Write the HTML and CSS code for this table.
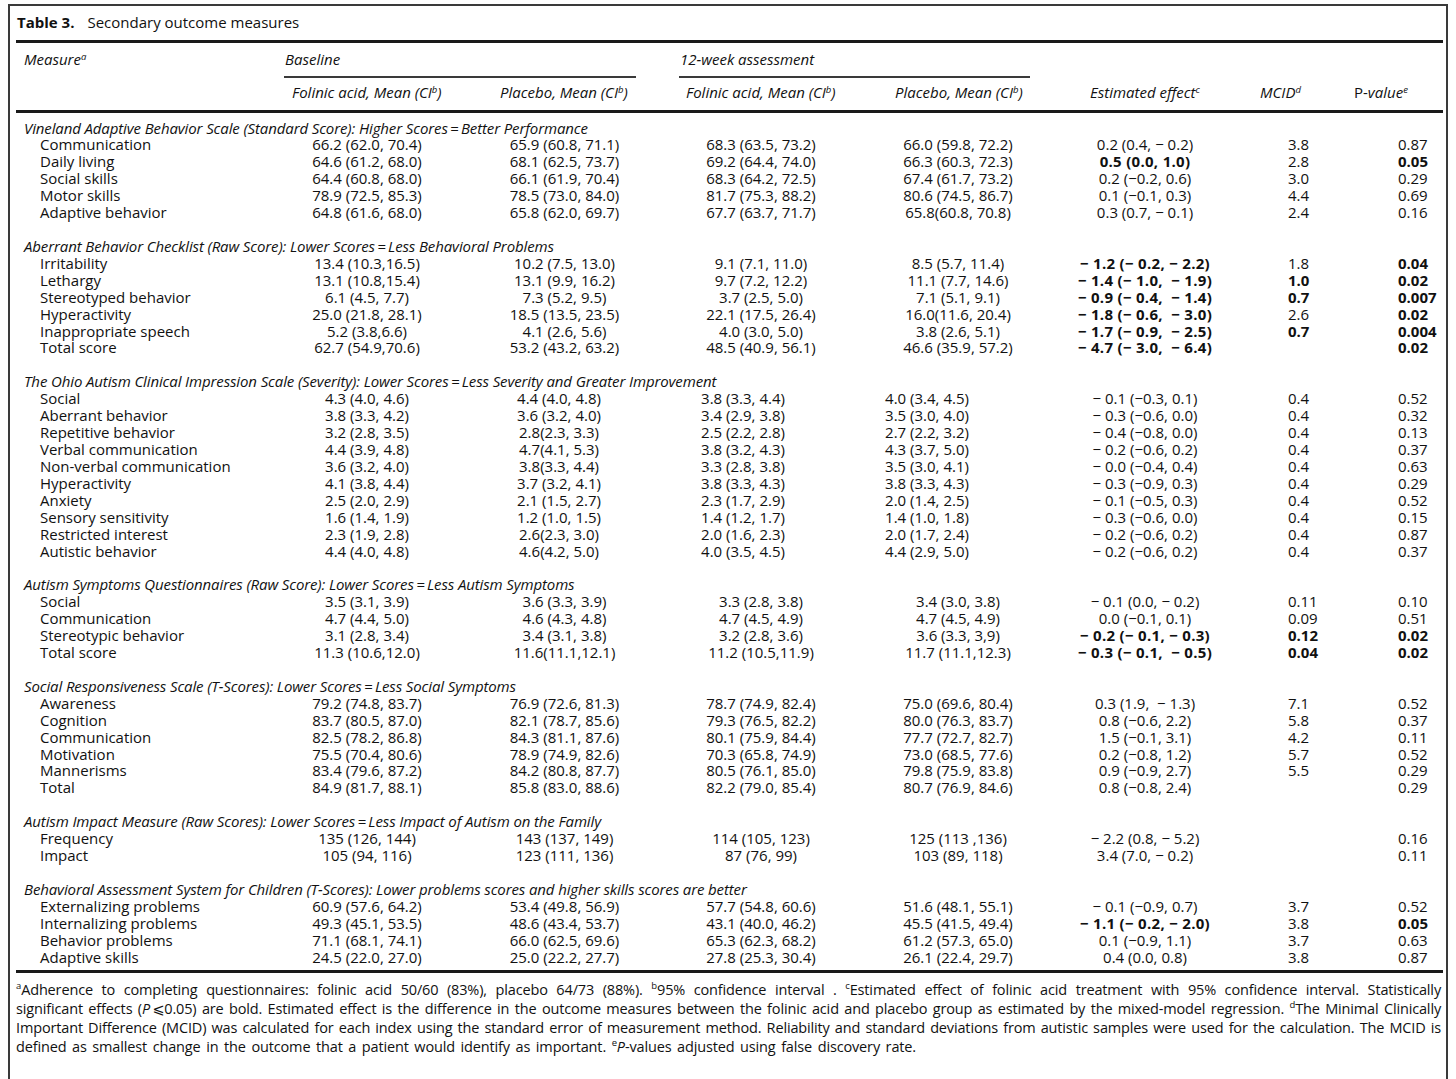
FILE: index.html
```html
<!DOCTYPE html>
<html lang="en">
<head>
<meta charset="utf-8">
<title>Table 3. Secondary outcome measures</title>
<link rel="stylesheet" href="styles.css">
</head>
<body>
<div class="frame">
  <div class="caption"><b>Table 3.</b>Secondary outcome measures</div>

  <div class="thead">
    <div class="hrow top">
      <div class="h-measure">Measure<sup>a</sup></div>
      <div class="group g1"><span>Baseline</span></div>
      <div class="group g2"><span>12-week assessment</span></div>
    </div>
    <div class="hrow sub">
      <div></div>
      <div class="h1">Folinic acid, Mean (CI<sup>b</sup>)</div>
      <div class="h2">Placebo, Mean (CI<sup>b</sup>)</div>
      <div class="h3">Folinic acid, Mean (CI<sup>b</sup>)</div>
      <div class="h4">Placebo, Mean (CI<sup>b</sup>)</div>
      <div class="h5">Estimated effect<sup>c</sup></div>
      <div class="h6">MCID<sup>d</sup></div>
      <div class="h7"><span class="up">P-</span>value<sup>e</sup></div>
    </div>
  </div>

  <div class="tbody">
    <div class="sec">
      <div class="sh">Vineland Adaptive Behavior Scale (Standard Score): Higher Scores&#8201;=&#8201;Better Performance</div>
      <div class="r"><span class="m">Communication</span><span class="v v1">66.2 (62.0, 70.4)</span><span class="v v2">65.9 (60.8, 71.1)</span><span class="v v3">68.3 (63.5, 73.2)</span><span class="v v4">66.0 (59.8, 72.2)</span><span class="v v5">0.2 (0.4, &minus; 0.2)</span><span class="mc">3.8</span><span class="pv">0.87</span></div>
      <div class="r"><span class="m">Daily living</span><span class="v v1">64.6 (61.2, 68.0)</span><span class="v v2">68.1 (62.5, 73.7)</span><span class="v v3">69.2 (64.4, 74.0)</span><span class="v v4">66.3 (60.3, 72.3)</span><span class="v v5"><b>0.5 (0.0, 1.0)</b></span><span class="mc">2.8</span><span class="pv"><b>0.05</b></span></div>
      <div class="r"><span class="m">Social skills</span><span class="v v1">64.4 (60.8, 68.0)</span><span class="v v2">66.1 (61.9, 70.4)</span><span class="v v3">68.3 (64.2, 72.5)</span><span class="v v4">67.4 (61.7, 73.2)</span><span class="v v5">0.2 (&minus;0.2, 0.6)</span><span class="mc">3.0</span><span class="pv">0.29</span></div>
      <div class="r"><span class="m">Motor skills</span><span class="v v1">78.9 (72.5, 85.3)</span><span class="v v2">78.5 (73.0, 84.0)</span><span class="v v3">81.7 (75.3, 88.2)</span><span class="v v4">80.6 (74.5, 86.7)</span><span class="v v5">0.1 (&minus;0.1, 0.3)</span><span class="mc">4.4</span><span class="pv">0.69</span></div>
      <div class="r"><span class="m">Adaptive behavior</span><span class="v v1">64.8 (61.6, 68.0)</span><span class="v v2">65.8 (62.0, 69.7)</span><span class="v v3">67.7 (63.7, 71.7)</span><span class="v v4">65.8(60.8, 70.8)</span><span class="v v5">0.3 (0.7, &minus; 0.1)</span><span class="mc">2.4</span><span class="pv">0.16</span></div>
    </div>

    <div class="sec">
      <div class="sh">Aberrant Behavior Checklist (Raw Score): Lower Scores&#8201;=&#8201;Less Behavioral Problems</div>
      <div class="r"><span class="m">Irritability</span><span class="v v1">13.4 (10.3,16.5)</span><span class="v v2">10.2 (7.5, 13.0)</span><span class="v v3">9.1 (7.1, 11.0)</span><span class="v v4">8.5 (5.7, 11.4)</span><span class="v v5"><b>&minus; 1.2 (&minus; 0.2, &minus; 2.2)</b></span><span class="mc">1.8</span><span class="pv"><b>0.04</b></span></div>
      <div class="r"><span class="m">Lethargy</span><span class="v v1">13.1 (10.8,15.4)</span><span class="v v2">13.1 (9.9, 16.2)</span><span class="v v3">9.7 (7.2, 12.2)</span><span class="v v4">11.1 (7.7, 14.6)</span><span class="v v5"><b>&minus; 1.4 (&minus; 1.0, &nbsp;&minus; 1.9)</b></span><span class="mc"><b>1.0</b></span><span class="pv"><b>0.02</b></span></div>
      <div class="r"><span class="m">Stereotyped behavior</span><span class="v v1">6.1 (4.5, 7.7)</span><span class="v v2">7.3 (5.2, 9.5)</span><span class="v v3">3.7 (2.5, 5.0)</span><span class="v v4">7.1 (5.1, 9.1)</span><span class="v v5"><b>&minus; 0.9 (&minus; 0.4, &nbsp;&minus; 1.4)</b></span><span class="mc"><b>0.7</b></span><span class="pv"><b>0.007</b></span></div>
      <div class="r"><span class="m">Hyperactivity</span><span class="v v1">25.0 (21.8, 28.1)</span><span class="v v2">18.5 (13.5, 23.5)</span><span class="v v3">22.1 (17.5, 26.4)</span><span class="v v4">16.0(11.6, 20.4)</span><span class="v v5"><b>&minus; 1.8 (&minus; 0.6, &nbsp;&minus; 3.0)</b></span><span class="mc">2.6</span><span class="pv"><b>0.02</b></span></div>
      <div class="r"><span class="m">Inappropriate speech</span><span class="v v1">5.2 (3.8,6.6)</span><span class="v v2">4.1 (2.6, 5.6)</span><span class="v v3">4.0 (3.0, 5.0)</span><span class="v v4">3.8 (2.6, 5.1)</span><span class="v v5"><b>&minus; 1.7 (&minus; 0.9, &nbsp;&minus; 2.5)</b></span><span class="mc"><b>0.7</b></span><span class="pv"><b>0.004</b></span></div>
      <div class="r"><span class="m">Total score</span><span class="v v1">62.7 (54.9,70.6)</span><span class="v v2">53.2 (43.2, 63.2)</span><span class="v v3">48.5 (40.9, 56.1)</span><span class="v v4">46.6 (35.9, 57.2)</span><span class="v v5"><b>&minus; 4.7 (&minus; 3.0, &nbsp;&minus; 6.4)</b></span><span class="mc"></span><span class="pv"><b>0.02</b></span></div>
    </div>

    <div class="sec ohio">
      <div class="sh">The Ohio Autism Clinical Impression Scale (Severity): Lower Scores&#8201;=&#8201;Less Severity and Greater Improvement</div>
      <div class="r"><span class="m">Social</span><span class="v v1">4.3 (4.0, 4.6)</span><span class="v v2">4.4 (4.0, 4.8)</span><span class="v v3">3.8 (3.3, 4.4)</span><span class="v v4">4.0 (3.4, 4.5)</span><span class="v v5">&minus; 0.1 (&minus;0.3, 0.1)</span><span class="mc">0.4</span><span class="pv">0.52</span></div>
      <div class="r"><span class="m">Aberrant behavior</span><span class="v v1">3.8 (3.3, 4.2)</span><span class="v v2">3.6 (3.2, 4.0)</span><span class="v v3">3.4 (2.9, 3.8)</span><span class="v v4">3.5 (3.0, 4.0)</span><span class="v v5">&minus; 0.3 (&minus;0.6, 0.0)</span><span class="mc">0.4</span><span class="pv">0.32</span></div>
      <div class="r"><span class="m">Repetitive behavior</span><span class="v v1">3.2 (2.8, 3.5)</span><span class="v v2">2.8(2.3, 3.3)</span><span class="v v3">2.5 (2.2, 2.8)</span><span class="v v4">2.7 (2.2, 3.2)</span><span class="v v5">&minus; 0.4 (&minus;0.8, 0.0)</span><span class="mc">0.4</span><span class="pv">0.13</span></div>
      <div class="r"><span class="m">Verbal communication</span><span class="v v1">4.4 (3.9, 4.8)</span><span class="v v2">4.7(4.1, 5.3)</span><span class="v v3">3.8 (3.2, 4.3)</span><span class="v v4">4.3 (3.7, 5.0)</span><span class="v v5">&minus; 0.2 (&minus;0.6, 0.2)</span><span class="mc">0.4</span><span class="pv">0.37</span></div>
      <div class="r"><span class="m">Non-verbal communication</span><span class="v v1">3.6 (3.2, 4.0)</span><span class="v v2">3.8(3.3, 4.4)</span><span class="v v3">3.3 (2.8, 3.8)</span><span class="v v4">3.5 (3.0, 4.1)</span><span class="v v5">&minus; 0.0 (&minus;0.4, 0.4)</span><span class="mc">0.4</span><span class="pv">0.63</span></div>
      <div class="r"><span class="m">Hyperactivity</span><span class="v v1">4.1 (3.8, 4.4)</span><span class="v v2">3.7 (3.2, 4.1)</span><span class="v v3">3.8 (3.3, 4.3)</span><span class="v v4">3.8 (3.3, 4.3)</span><span class="v v5">&minus; 0.3 (&minus;0.9, 0.3)</span><span class="mc">0.4</span><span class="pv">0.29</span></div>
      <div class="r"><span class="m">Anxiety</span><span class="v v1">2.5 (2.0, 2.9)</span><span class="v v2">2.1 (1.5, 2.7)</span><span class="v v3">2.3 (1.7, 2.9)</span><span class="v v4">2.0 (1.4, 2.5)</span><span class="v v5">&minus; 0.1 (&minus;0.5, 0.3)</span><span class="mc">0.4</span><span class="pv">0.52</span></div>
      <div class="r"><span class="m">Sensory sensitivity</span><span class="v v1">1.6 (1.4, 1.9)</span><span class="v v2">1.2 (1.0, 1.5)</span><span class="v v3">1.4 (1.2, 1.7)</span><span class="v v4">1.4 (1.0, 1.8)</span><span class="v v5">&minus; 0.3 (&minus;0.6, 0.0)</span><span class="mc">0.4</span><span class="pv">0.15</span></div>
      <div class="r"><span class="m">Restricted interest</span><span class="v v1">2.3 (1.9, 2.8)</span><span class="v v2">2.6(2.3, 3.0)</span><span class="v v3">2.0 (1.6, 2.3)</span><span class="v v4">2.0 (1.7, 2.4)</span><span class="v v5">&minus; 0.2 (&minus;0.6, 0.2)</span><span class="mc">0.4</span><span class="pv">0.87</span></div>
      <div class="r"><span class="m">Autistic behavior</span><span class="v v1">4.4 (4.0, 4.8)</span><span class="v v2">4.6(4.2, 5.0)</span><span class="v v3">4.0 (3.5, 4.5)</span><span class="v v4">4.4 (2.9, 5.0)</span><span class="v v5">&minus; 0.2 (&minus;0.6, 0.2)</span><span class="mc">0.4</span><span class="pv">0.37</span></div>
    </div>

    <div class="sec">
      <div class="sh">Autism Symptoms Questionnaires (Raw Score): Lower Scores&#8201;=&#8201;Less Autism Symptoms</div>
      <div class="r"><span class="m">Social</span><span class="v v1">3.5 (3.1, 3.9)</span><span class="v v2">3.6 (3.3, 3.9)</span><span class="v v3">3.3 (2.8, 3.8)</span><span class="v v4">3.4 (3.0, 3.8)</span><span class="v v5">&minus; 0.1 (0.0, &minus; 0.2)</span><span class="mc">0.11</span><span class="pv">0.10</span></div>
      <div class="r"><span class="m">Communication</span><span class="v v1">4.7 (4.4, 5.0)</span><span class="v v2">4.6 (4.3, 4.8)</span><span class="v v3">4.7 (4.5, 4.9)</span><span class="v v4">4.7 (4.5, 4.9)</span><span class="v v5">0.0 (&minus;0.1, 0.1)</span><span class="mc">0.09</span><span class="pv">0.51</span></div>
      <div class="r"><span class="m">Stereotypic behavior</span><span class="v v1">3.1 (2.8, 3.4)</span><span class="v v2">3.4 (3.1, 3.8)</span><span class="v v3">3.2 (2.8, 3.6)</span><span class="v v4">3.6 (3.3, 3,9)</span><span class="v v5"><b>&minus; 0.2 (&minus; 0.1, &minus; 0.3)</b></span><span class="mc"><b>0.12</b></span><span class="pv"><b>0.02</b></span></div>
      <div class="r"><span class="m">Total score</span><span class="v v1">11.3 (10.6,12.0)</span><span class="v v2">11.6(11.1,12.1)</span><span class="v v3">11.2 (10.5,11.9)</span><span class="v v4">11.7 (11.1,12.3)</span><span class="v v5"><b>&minus; 0.3 (&minus; 0.1, &nbsp;&minus; 0.5)</b></span><span class="mc"><b>0.04</b></span><span class="pv"><b>0.02</b></span></div>
    </div>

    <div class="sec">
      <div class="sh">Social Responsiveness Scale (T-Scores): Lower Scores&#8201;=&#8201;Less Social Symptoms</div>
      <div class="r"><span class="m">Awareness</span><span class="v v1">79.2 (74.8, 83.7)</span><span class="v v2">76.9 (72.6, 81.3)</span><span class="v v3">78.7 (74.9, 82.4)</span><span class="v v4">75.0 (69.6, 80.4)</span><span class="v v5">0.3 (1.9, &nbsp;&minus; 1.3)</span><span class="mc">7.1</span><span class="pv">0.52</span></div>
      <div class="r"><span class="m">Cognition</span><span class="v v1">83.7 (80.5, 87.0)</span><span class="v v2">82.1 (78.7, 85.6)</span><span class="v v3">79.3 (76.5, 82.2)</span><span class="v v4">80.0 (76.3, 83.7)</span><span class="v v5">0.8 (&minus;0.6, 2.2)</span><span class="mc">5.8</span><span class="pv">0.37</span></div>
      <div class="r"><span class="m">Communication</span><span class="v v1">82.5 (78.2, 86.8)</span><span class="v v2">84.3 (81.1, 87.6)</span><span class="v v3">80.1 (75.9, 84.4)</span><span class="v v4">77.7 (72.7, 82.7)</span><span class="v v5">1.5 (&minus;0.1, 3.1)</span><span class="mc">4.2</span><span class="pv">0.11</span></div>
      <div class="r"><span class="m">Motivation</span><span class="v v1">75.5 (70.4, 80.6)</span><span class="v v2">78.9 (74.9, 82.6)</span><span class="v v3">70.3 (65.8, 74.9)</span><span class="v v4">73.0 (68.5, 77.6)</span><span class="v v5">0.2 (&minus;0.8, 1.2)</span><span class="mc">5.7</span><span class="pv">0.52</span></div>
      <div class="r"><span class="m">Mannerisms</span><span class="v v1">83.4 (79.6, 87.2)</span><span class="v v2">84.2 (80.8, 87.7)</span><span class="v v3">80.5 (76.1, 85.0)</span><span class="v v4">79.8 (75.9, 83.8)</span><span class="v v5">0.9 (&minus;0.9, 2.7)</span><span class="mc">5.5</span><span class="pv">0.29</span></div>
      <div class="r"><span class="m">Total</span><span class="v v1">84.9 (81.7, 88.1)</span><span class="v v2">85.8 (83.0, 88.6)</span><span class="v v3">82.2 (79.0, 85.4)</span><span class="v v4">80.7 (76.9, 84.6)</span><span class="v v5">0.8 (&minus;0.8, 2.4)</span><span class="mc"></span><span class="pv">0.29</span></div>
    </div>

    <div class="sec">
      <div class="sh">Autism Impact Measure (Raw Scores): Lower Scores&#8201;=&#8201;Less Impact of Autism on the Family</div>
      <div class="r"><span class="m">Frequency</span><span class="v v1">135 (126, 144)</span><span class="v v2">143 (137, 149)</span><span class="v v3">114 (105, 123)</span><span class="v v4">125 (113 ,136)</span><span class="v v5">&minus; 2.2 (0.8, &minus; 5.2)</span><span class="mc"></span><span class="pv">0.16</span></div>
      <div class="r"><span class="m">Impact</span><span class="v v1">105 (94, 116)</span><span class="v v2">123 (111, 136)</span><span class="v v3">87 (76, 99)</span><span class="v v4">103 (89, 118)</span><span class="v v5">3.4 (7.0, &minus; 0.2)</span><span class="mc"></span><span class="pv">0.11</span></div>
    </div>

    <div class="sec">
      <div class="sh">Behavioral Assessment System for Children (T-Scores): Lower problems scores and higher skills scores are better</div>
      <div class="r"><span class="m">Externalizing problems</span><span class="v v1">60.9 (57.6, 64.2)</span><span class="v v2">53.4 (49.8, 56.9)</span><span class="v v3">57.7 (54.8, 60.6)</span><span class="v v4">51.6 (48.1, 55.1)</span><span class="v v5">&minus; 0.1 (&minus;0.9, 0.7)</span><span class="mc">3.7</span><span class="pv">0.52</span></div>
      <div class="r"><span class="m">Internalizing problems</span><span class="v v1">49.3 (45.1, 53.5)</span><span class="v v2">48.6 (43.4, 53.7)</span><span class="v v3">43.1 (40.0, 46.2)</span><span class="v v4">45.5 (41.5, 49.4)</span><span class="v v5"><b>&minus; 1.1 (&minus; 0.2, &minus; 2.0)</b></span><span class="mc">3.8</span><span class="pv"><b>0.05</b></span></div>
      <div class="r"><span class="m">Behavior problems</span><span class="v v1">71.1 (68.1, 74.1)</span><span class="v v2">66.0 (62.5, 69.6)</span><span class="v v3">65.3 (62.3, 68.2)</span><span class="v v4">61.2 (57.3, 65.0)</span><span class="v v5">0.1 (&minus;0.9, 1.1)</span><span class="mc">3.7</span><span class="pv">0.63</span></div>
      <div class="r"><span class="m">Adaptive skills</span><span class="v v1">24.5 (22.0, 27.0)</span><span class="v v2">25.0 (22.2, 27.7)</span><span class="v v3">27.8 (25.3, 30.4)</span><span class="v v4">26.1 (22.4, 29.7)</span><span class="v v5">0.4 (0.0, 0.8)</span><span class="mc">3.8</span><span class="pv">0.87</span></div>
    </div>
  </div>

  <div class="notes">
    <span class="ln"><sup>a</sup>Adherence to completing questionnaires: folinic acid 50/60 (83%), placebo 64/73 (88%). <sup>b</sup>95% confidence interval . <sup>c</sup>Estimated effect of folinic acid treatment with 95% confidence interval. Statistically</span>
    <span class="ln">significant effects (<i>P</i>&thinsp;&#10877;0.05) are bold. Estimated effect is the difference in the outcome measures between the folinic acid and placebo group as estimated by the mixed-model regression. <sup>d</sup>The Minimal Clinically</span>
    <span class="ln">Important Difference (MCID) was calculated for each index using the standard error of measurement method. Reliability and standard deviations from autistic samples were used for the calculation. The MCID is</span>
    <span class="ln last">defined as smallest change in the outcome that a patient would identify as important. <sup>e</sup><i>P</i>-values adjusted using false discovery rate.</span>
  </div>
</div>
</body>
</html>
```

FILE: styles.css
```css
* { box-sizing: border-box; }

html, body {
  margin: 0;
  background: #ffffff;
}

body {
  padding: 4px 8px 0;
  font-family: "Open Sans", "Noto Sans", "DejaVu Sans", sans-serif;
  font-size: 15px;
  font-weight: 500;
  color: #111111;
}

.frame {
  border: 2px solid #3a3a3a;
  border-bottom: none;
  padding: 0 3px 60px 6px;
}

.caption {
  padding: 8px 0 9px 1px;
  line-height: 17px;
}

.caption b {
  font-weight: 700;
  margin-right: 13px;
}

sup {
  font-size: 9.5px;
  line-height: 0;
  vertical-align: 5px;
}

.thead {
  border-top: 3px solid #1a1a1a;
  border-bottom: 3px solid #1a1a1a;
  font-style: italic;
  line-height: 17px;
}

.hrow {
  display: grid;
  grid-template-columns: 268px 166px 229px 164px 230px 144px 137px 89px;
}

.hrow.top {
  padding-top: 8px;
}

.hrow.top .h-measure {
  padding-left: 8px;
  padding-bottom: 8px;
}

.group {
  border-bottom: 2px solid #3a3a3a;
  margin-right: 43px;
  padding-left: 1px;
  padding-bottom: 8px;
}

.g1 { grid-column: 2 / 4; }
.g2 { grid-column: 4 / 6; }

.hrow.sub {
  margin-top: 6px;
  padding-bottom: 9px;
  white-space: nowrap;
}

.h1 { padding-left: 8px; }
.h2 { padding-left: 50px; }
.h3 { padding-left: 7px; }
.h4 { padding-left: 52px; }
.h5 { padding-left: 17px; }
.h6 { padding-left: 43px; }
.h7 { padding-left: 0; }
.h7 .up { font-style: normal; }

.tbody {
  padding: 6.5px 0 4.5px;
  line-height: 16.92px;
}

.sec + .sec {
  margin-top: 16.92px;
}

.sh {
  font-style: italic;
  padding-left: 8px;
  white-space: nowrap;
  letter-spacing: -0.12px;
}

.r {
  display: grid;
  grid-template-columns: 268px 166px 229px 164px 230px 144px 137px 89px;
  white-space: nowrap;
}

.r .m { padding-left: 24px; }

.r .v { text-align: center; }

.r b { font-weight: 700; }

.r .v5 b { letter-spacing: 0.3px; }

.ohio .v2 { padding-right: 11px; }
.ohio .v3 { padding-right: 36px; }
.ohio .v4 { padding-right: 62px; }

.r .mc { padding-left: 71px; }
.r .pv { padding-left: 44px; }

.notes {
  border-top: 3px solid #1a1a1a;
  padding: 6.5px 2px 0 0;
  line-height: 19px;
  font-size: 14.5px;
  letter-spacing: -0.15px;
}

.notes .ln {
  display: block;
  text-align: justify;
  text-align-last: justify;
}

.notes .ln.last {
  text-align-last: left;
  word-spacing: 2px;
}

.notes sup {
  font-size: 9.5px;
  vertical-align: 6px;
}
```
